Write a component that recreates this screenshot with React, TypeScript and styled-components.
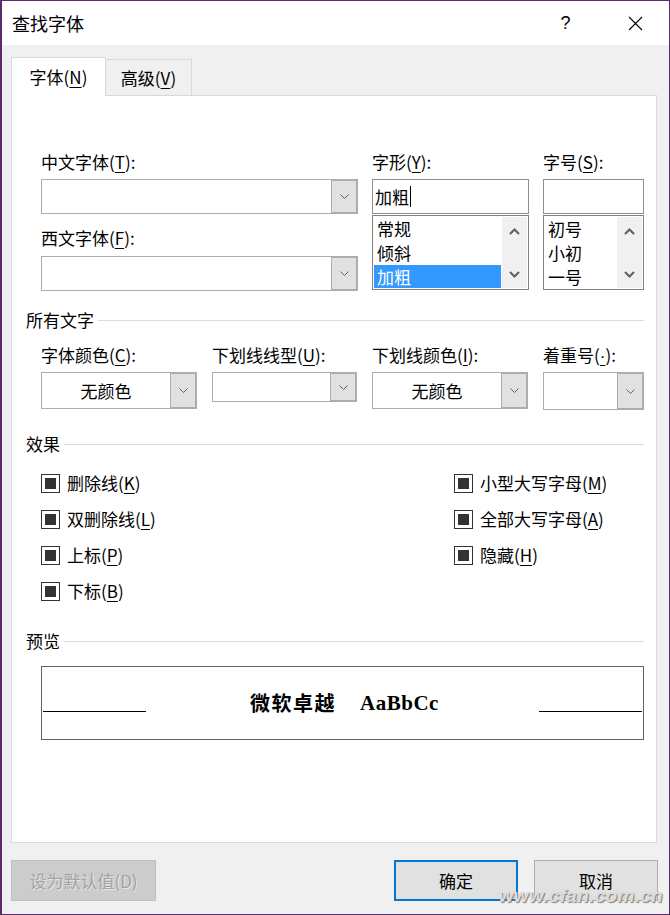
import React from "react";
import styled, { createGlobalStyle } from "styled-components";

const FONT = `"Noto Sans CJK SC", "Noto Sans", sans-serif`;

const GlobalStyle = createGlobalStyle`
  html, body {
    margin: 0;
    padding: 0;
    background: #ffffff;
  }
  body {
    font-family: ${FONT};
  }
`;

type Field = { label: string; key: string; tail?: string };

const topLeft: Field[] = [
  { label: "中文字体(", key: "T", tail: "):" },
  { label: "西文字体(", key: "F", tail: "):" },
];

const styleItems = ["常规", "倾斜", "加粗"];
const sizeItems = ["初号", "小初", "一号"];

const colorRow = [
  { label: "字体颜色(", key: "C", value: "无颜色", h: 37 },
  { label: "下划线线型(", key: "U", value: "", h: 30 },
  { label: "下划线颜色(", key: "I", value: "无颜色", h: 37 },
  { label: "着重号(", key: "·", value: "", h: 38 },
];

const effectsLeft = [
  { label: "删除线(", key: "K" },
  { label: "双删除线(", key: "L" },
  { label: "上标(", key: "P" },
  { label: "下标(", key: "B" },
];

const effectsRight = [
  { label: "小型大写字母(", key: "M" },
  { label: "全部大写字母(", key: "A" },
  { label: "隐藏(", key: "H" },
];

const Chevron = ({ up, bold }: { up?: boolean; bold?: boolean }) =>
  bold ? (
    <svg width="11" height="7" viewBox="0 0 11 7">
      <path
        d={up ? "M1 6 L5.5 1.5 L10 6" : "M1 1 L5.5 5.5 L10 1"}
        fill="none"
        stroke="#5f5f5f"
        strokeWidth="2"
      />
    </svg>
  ) : (
    <svg width="9" height="5" viewBox="0 0 9 5">
      <path d="M0.5 0.5 L4.5 4.5 L8.5 0.5" fill="none" stroke="#606060" strokeWidth="1" />
    </svg>
  );

const Label = ({ f }: { f: Field }) => (
  <FieldLabel>
    {f.label}
    <Key $narrow={f.key === "·"}>{f.key}</Key>
    {f.tail ?? ")"}
  </FieldLabel>
);

const App = () => {
  return (
    <>
      <GlobalStyle />
      <Window>
        <TitleBar>
          <Title>查找字体</Title>
          <Help>?</Help>
          <svg width="15" height="15" viewBox="0 0 15 15">
            <path d="M1 1 L14 14 M14 1 L1 14" stroke="#000" strokeWidth="1.1" />
          </svg>
        </TitleBar>

        <Body>
          <TabRow>
            <Tab $active>
              字体(<Key>N</Key>)
            </Tab>
            <Tab>
              高级(<Key>V</Key>)
            </Tab>
          </TabRow>

          <Panel>
            <TopGrid>
              <Column>
                <Label f={topLeft[0]} />
                <Combo $h={35} $mt={6}>
                  <ComboValue />
                  <DropBtn>
                    <Chevron />
                  </DropBtn>
                </Combo>
                <Spacer $h={13} />
                <Label f={topLeft[1]} />
                <Combo $h={35} $mt={7}>
                  <ComboValue />
                  <DropBtn>
                    <Chevron />
                  </DropBtn>
                </Combo>
              </Column>

              <Column>
                <Label f={{ label: "字形(", key: "Y", tail: "):" }} />
                <TextBox>
                  加粗
                  <Caret />
                </TextBox>
                <ListBox>
                  <Items>
                    {styleItems.map((it, i) => (
                      <Item key={it} $selected={i === 2}>
                        {it}
                      </Item>
                    ))}
                  </Items>
                  <ScrollBar>
                    <Chevron up bold />
                    <Chevron bold />
                  </ScrollBar>
                </ListBox>
              </Column>

              <Column>
                <Label f={{ label: "字号(", key: "S", tail: "):" }} />
                <TextBox />
                <ListBox>
                  <Items>
                    {sizeItems.map((it) => (
                      <Item key={it}>{it}</Item>
                    ))}
                  </Items>
                  <ScrollBar>
                    <Chevron up bold />
                    <Chevron bold />
                  </ScrollBar>
                </ListBox>
              </Column>
            </TopGrid>

            <SectionHead $mt={18}>所有文字</SectionHead>
            <ColorGrid>
              {colorRow.map((c) => (
                <Column key={c.key}>
                  <Label f={{ label: c.label, key: c.key, tail: "):" }} />
                  <Combo $h={c.h} $mt={6}>
                    <ComboValue>{c.value}</ComboValue>
                    <DropBtn>
                      <Chevron />
                    </DropBtn>
                  </Combo>
                </Column>
              ))}
            </ColorGrid>

            <SectionHead $mt={23}>效果</SectionHead>
            <EffectGrid>
              <Column>
                {effectsLeft.map((e) => (
                  <CheckRow key={e.key}>
                    <CheckBox />
                    <span>
                      {e.label}
                      <Key>{e.key}</Key>)
                    </span>
                  </CheckRow>
                ))}
              </Column>
              <Column>
                {effectsRight.map((e) => (
                  <CheckRow key={e.key}>
                    <CheckBox />
                    <span>
                      {e.label}
                      <Key>{e.key}</Key>)
                    </span>
                  </CheckRow>
                ))}
              </Column>
            </EffectGrid>

            <SectionHead $mt={21}>预览</SectionHead>
            <Preview>
              <PreviewLine />
              <PreviewText>
                <CnSample>微软卓越</CnSample>
                <LatinSample>AaBbCc</LatinSample>
              </PreviewText>
              <PreviewLine />
            </Preview>
          </Panel>

          <Footer>
            <Button $width={145} $disabled>
              设为默认值(D)
            </Button>
            <FooterRight>
              <Button $width={124} $primary>
                确定
              </Button>
              <Button $width={124}>取消</Button>
            </FooterRight>
          </Footer>
        </Body>

        <Watermark>www.cfan.com.cn</Watermark>
      </Window>
    </>
  );
};

const Window = styled.div`
  position: relative;
  width: 670px;
  height: 915px;
  box-sizing: border-box;
  border: 1px solid #5b2b6e;
  border-left-width: 2px;
  background: #f0f0f0;
  display: flex;
  flex-direction: column;
  font-family: ${FONT};
  font-size: 17px;
  line-height: 22px;
  color: #000;
  overflow: hidden;
`;

const TitleBar = styled.div`
  height: 44px;
  flex: none;
  background: #ffffff;
  display: flex;
  align-items: center;
  padding: 0 26px 0 10px;
`;

const Title = styled.div`
  flex: 1;
  font-size: 18px;
`;

const Help = styled.span`
  width: 15px;
  text-align: center;
  font-size: 18px;
  margin-right: 55px;
  font-family: "Liberation Sans", sans-serif;
`;

const Body = styled.div`
  flex: 1;
  display: flex;
  flex-direction: column;
  padding: 12px 12px 0 9px;
`;

const TabRow = styled.div`
  display: flex;
  align-items: flex-end;
  height: 39px;
  margin-bottom: -1px;
  position: relative;
  z-index: 1;
`;

const Tab = styled.div<{ $active?: boolean }>`
  box-sizing: border-box;
  display: flex;
  align-items: center;
  justify-content: center;
  height: ${(p) => (p.$active ? 39 : 37)}px;
  width: ${(p) => (p.$active ? 95 : 86)}px;
  background: ${(p) => (p.$active ? "#ffffff" : "#f0f0f0")};
  border: 1px solid #d9d9d9;
  border-bottom: ${(p) => (p.$active ? "none" : "1px solid #d9d9d9")};
  border-left: ${(p) => (p.$active ? "1px solid #d9d9d9" : "none")};
`;

const Key = styled.u<{ $narrow?: boolean }>`
  text-decoration-thickness: 1px;
  text-underline-offset: 3px;
  font-family: ${(p) => (p.$narrow ? `"Liberation Sans", sans-serif` : "inherit")};
`;

const Panel = styled.div`
  height: 748px;
  box-sizing: border-box;
  background: #ffffff;
  border: 1px solid #d9d9d9;
  padding: 55px 12px 0 14px;
  display: flex;
  flex-direction: column;
`;

const TopGrid = styled.div`
  display: grid;
  grid-template-columns: 317px 157px 101px;
  column-gap: 14px;
  padding-left: 15px;
`;

const Column = styled.div`
  display: flex;
  flex-direction: column;
`;

const Spacer = styled.div<{ $h: number }>`
  height: ${(p) => p.$h}px;
`;

const FieldLabel = styled.div`
  height: 22px;
  white-space: nowrap;
`;

const Combo = styled.div<{ $h: number; $mt: number }>`
  display: flex;
  height: ${(p) => p.$h}px;
  margin-top: ${(p) => p.$mt}px;
  box-sizing: border-box;
  border: 1px solid #adadad;
  background: #ffffff;
`;

const ComboValue = styled.div`
  flex: 1;
  display: flex;
  align-items: center;
  justify-content: center;
`;

const DropBtn = styled.div`
  width: 25px;
  flex: none;
  background: #e1e1e1;
  border-left: 1px solid #adadad;
  box-shadow: inset -1px 1px 0 #adadad, inset 0 -1px 0 #adadad;
  display: flex;
  align-items: center;
  justify-content: center;
`;

const TextBox = styled.div`
  margin-top: 6px;
  height: 35px;
  box-sizing: border-box;
  border: 1px solid #8f8f8f;
  display: flex;
  align-items: center;
  padding-left: 2px;
`;

const Caret = styled.span`
  width: 1px;
  height: 21px;
  background: #000;
  margin-left: 1px;
`;

const ListBox = styled.div`
  margin-top: 1px;
  height: 75px;
  box-sizing: border-box;
  border: 1px solid #828282;
  display: flex;
  padding: 1px;
`;

const Items = styled.div`
  flex: 1;
  display: flex;
  flex-direction: column;
  overflow: hidden;
`;

const Item = styled.div<{ $selected?: boolean }>`
  height: 24px;
  line-height: 24px;
  flex: none;
  padding-left: 3px;
  background: ${(p) => (p.$selected ? "#3399ff" : "transparent")};
  color: ${(p) => (p.$selected ? "#ffffff" : "#000000")};
`;

const ScrollBar = styled.div`
  width: 25px;
  flex: none;
  margin-left: 1px;
  background: #f0f0f0;
  display: flex;
  flex-direction: column;
  align-items: center;
  justify-content: space-between;
  padding: 11px 0 10px;
  box-sizing: border-box;
`;

const SectionHead = styled.div<{ $mt: number }>`
  display: flex;
  align-items: center;
  gap: 4px;
  height: 22px;
  margin-top: ${(p) => p.$mt}px;
  white-space: nowrap;

  &::after {
    content: "";
    flex: 1;
    height: 1px;
    background: #dcdcdc;
  }
`;

const ColorGrid = styled.div`
  display: grid;
  grid-template-columns: 156px 145px 156px 101px;
  column-gap: 15px;
  align-items: start;
  padding-left: 15px;
  margin-top: 13px;
`;

const EffectGrid = styled.div`
  display: grid;
  grid-template-columns: 413px 1fr;
  padding-left: 15px;
  margin-top: 10px;
`;

const CheckRow = styled.div`
  display: flex;
  align-items: center;
  gap: 7px;
  height: 36px;
  white-space: nowrap;
`;

const CheckBox = styled.span`
  width: 19px;
  height: 19px;
  flex: none;
  box-sizing: border-box;
  border: 1px solid #333333;
  background: #ffffff;
  display: flex;
  align-items: center;
  justify-content: center;

  &::after {
    content: "";
    width: 11px;
    height: 11px;
    background: #333333;
  }
`;

const Preview = styled.div`
  margin: 14px 0 0 15px;
  height: 74px;
  box-sizing: border-box;
  border: 1px solid #646464;
  display: flex;
  align-items: center;
  padding: 0 1px;
`;

const PreviewLine = styled.div`
  width: 103px;
  height: 1px;
  background: #000;
  margin-top: 16px;
  flex: none;
`;

const PreviewText = styled.div`
  flex: 1;
  display: flex;
  justify-content: center;
  align-items: center;
  gap: 24px;
  padding-left: 4px;
`;

const CnSample = styled.span`
  font-family: ${FONT};
  font-weight: 700;
  font-size: 20px;
  letter-spacing: 1.5px;
`;

const LatinSample = styled.span`
  font-family: "Liberation Serif", serif;
  font-weight: 700;
  font-size: 21px;
  letter-spacing: 0.5px;
`;

const Footer = styled.div`
  display: flex;
  justify-content: space-between;
  margin-top: 17px;
  margin-right: -1px;
`;

const FooterRight = styled.div`
  display: flex;
  gap: 16px;
`;

const Button = styled.div<{ $width: number; $primary?: boolean; $disabled?: boolean }>`
  width: ${(p) => p.$width}px;
  height: 41px;
  box-sizing: border-box;
  display: flex;
  align-items: center;
  justify-content: center;
  background: ${(p) => (p.$disabled ? "#cccccc" : "#e1e1e1")};
  border: ${(p) =>
    p.$primary ? "2px solid #0078d7" : p.$disabled ? "1px solid #bfbfbf" : "1px solid #adadad"};
  color: ${(p) => (p.$disabled ? "#a3a3a3" : "#000")};
  text-shadow: ${(p) => (p.$disabled ? "1px 1px 0 #e6e6e6" : "none")};
`;

const Watermark = styled.div`
  position: absolute;
  right: 6px;
  bottom: 7px;
  font-family: "Liberation Sans", sans-serif;
  font-style: italic;
  font-weight: 700;
  font-size: 19px;
  letter-spacing: 0.3px;
  color: #dcdcdc;
  text-shadow: 1px 1px 1px #7d7d7d;
  pointer-events: none;
`;

export default App;
